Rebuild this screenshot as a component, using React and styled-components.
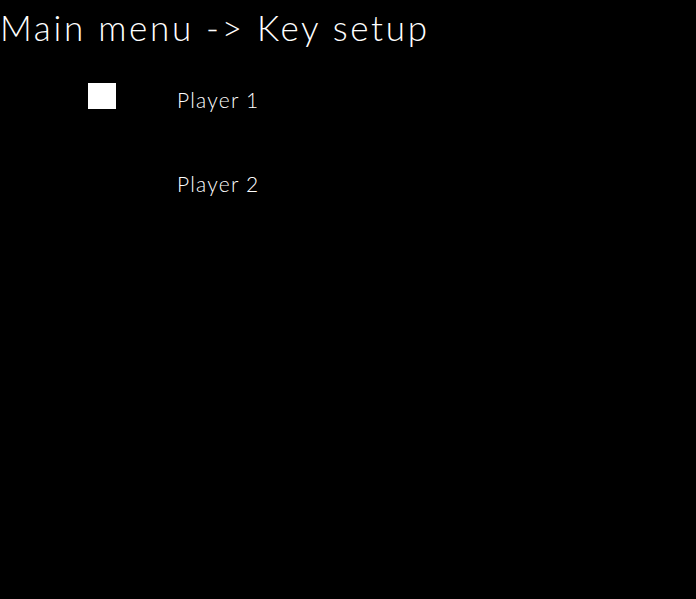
import React from "react";
import styled, { createGlobalStyle } from "styled-components";

const Global = createGlobalStyle`
  html, body { margin: 0; padding: 0; background: #000; }
  body { font-family: "Lato", "Open Sans", sans-serif; color: #fff; }
`;

const Screen = styled.div`
  width: 696px;
  height: 599px;
  background: #000;
  overflow: hidden;
`;

const Title = styled.h1`
  margin: 0;
  padding: 4px 0 0 0;
  font-family: "Lato", sans-serif;
  font-weight: 300;
  font-size: 35px;
  line-height: 46px;
  letter-spacing: 2.7px;
  color: #fff;
`;

const Menu = styled.ul`
  list-style: none;
  margin: 0;
  padding: 33px 0 0 88px;
  display: flex;
  flex-direction: column;
  gap: 58px;
`;

const Item = styled.li`
  display: grid;
  grid-template-columns: 28px auto;
  column-gap: 61px;
  align-items: start;
  height: 26px;
`;

const Cursor = styled.span`
  width: 28px;
  height: 26px;
  background: ${(p) => (p.$active ? "#fff" : "transparent")};
`;

const Label = styled.span`
  font-family: "Lato", sans-serif;
  font-weight: 300;
  font-size: 21px;
  letter-spacing: 1.2px;
  color: #fff;
  line-height: 26px;
  margin-top: 4px;
`;

const items = ["Player 1", "Player 2"];

export default function App() {
  return (
    <Screen>
      <Global />
      <Title>Main menu -&gt; Key setup</Title>
      <Menu>
        {items.map((t, i) => (
          <Item key={t}>
            <Cursor $active={i === 0} />
            <Label>{t}</Label>
          </Item>
        ))}
      </Menu>
    </Screen>
  );
}
